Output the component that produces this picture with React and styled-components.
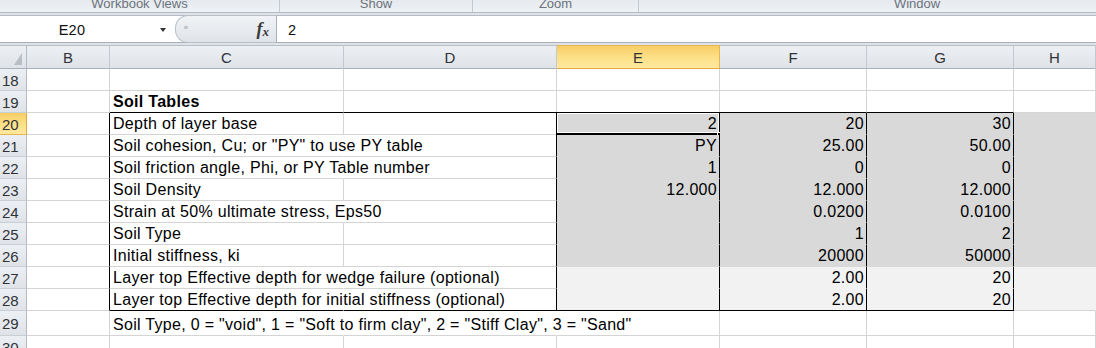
import React from 'react';
import styled, { createGlobalStyle } from 'styled-components';

const Global = createGlobalStyle`
  html, body { margin: 0; padding: 0; background: #fff; overflow: hidden; }
  body { font-family: "Liberation Sans", Arial, sans-serif; }
  * { box-sizing: border-box; }
`;

const Page = styled.div`
  width: 1096px;
  height: 348px;
  overflow: hidden;
  display: flex;
  flex-direction: column;
  background: #fff;
`;

const Ribbon = styled.div`
  flex: none;
  height: 13px;
  display: flex;
  overflow: hidden;
  background: linear-gradient(#e6eaef, #eef1f5);
  border-bottom: 1px solid #b3bac3;
`;

const RibbonGroup = styled.div`
  flex: none;
  width: ${p => p.$w}px;
  display: flex;
  justify-content: center;
  align-items: flex-start;
  border-right: 1px solid #c3c9d1;
  font-size: 13px;
  line-height: 13px;
  color: #6b727b;
  white-space: nowrap;
`;

const GroupLabel = styled.span`
  margin-top: -3px;
`;

const Strip = styled.div`
  flex: none;
  height: 2px;
  background: #dfe3e8;
`;

const FormulaBar = styled.div`
  flex: none;
  height: 28px;
  display: flex;
  align-items: stretch;
  background: #fff;
  border-top: 1px solid #b6bcc5;
  border-bottom: 1px solid #a9b0b9;
  font-size: 14.5px;
  color: #111;
`;

const NameBox = styled.div`
  flex: none;
  width: 144px;
  display: flex;
  align-items: center;
  justify-content: center;
  padding-top: 2px;
  letter-spacing: 0.3px;
`;

const DropBtn = styled.div`
  flex: none;
  width: 31px;
  display: flex;
  align-items: center;
  padding-left: 16px;
  padding-top: 1px;
`;

const Triangle = styled.span`
  width: 0;
  height: 0;
  border-left: 3.5px solid transparent;
  border-right: 3.5px solid transparent;
  border-top: 4px solid #333;
`;

const Pill = styled.div`
  flex: none;
  width: 102px;
  display: flex;
  align-items: center;
  justify-content: space-between;
  padding: 0 7px 0 8px;
  background: linear-gradient(#f1f3f6, #dfe3e8);
  border: 1px solid #b9c0c8;
  border-right-color: #a9b0b9;
  border-radius: 13px 0 0 13px;
  margin-top: -1px;
  margin-bottom: -1px;
`;

const Disabled = styled.span`
  width: 4px;
  height: 3px;
  border-radius: 1px;
  background: #c3c7cd;
  margin-top: -3px;
`;

const Fx = styled.span`
  font-family: "Liberation Serif", "Times New Roman", serif;
  font-style: italic;
  font-weight: 700;
  color: #3a3a3a;
  display: flex;
  align-items: baseline;
  padding-top: 1px;
`;

const FxF = styled.span`
  font-size: 18px;
`;

const FxX = styled.span`
  font-size: 13px;
  margin-left: 0px;
  position: relative;
  top: 1px;
`;

const FormulaValue = styled.div`
  flex: 1;
  display: flex;
  align-items: center;
  padding-left: 11px;
  padding-top: 2px;
`;

const Sheet = styled.div`
  flex: none;
  display: grid;
  grid-template-columns: 27px 83px 234px 213px 163px 147px 147px 1fr;
  grid-template-rows: 24px repeat(11, 22px) 25px 22px;
`;

const headerBg = 'linear-gradient(#eceff3, #dfe3e8)';
const selBg = 'linear-gradient(#f7cd66, #fde18a 55%, #ffe89f)';

const Corner = styled.div`
  background: ${headerBg};
  border-top: 1px solid #b7bec6;
  border-bottom: 1px solid #a9b0b9;
  border-right: 1px solid #b4bac2;
  display: flex;
  align-items: flex-end;
  justify-content: flex-end;
  padding: 0 4px 3px 0;
`;

const ColHeader = styled.div`
  background: ${p => (p.$sel ? selBg : headerBg)};
  border-top: 1px solid ${p => (p.$sel ? '#e3b653' : '#b7bec6')};
  border-bottom: 1px solid ${p => (p.$sel ? '#e0a93d' : '#a9b0b9')};
  border-right: 1px solid ${p => (p.$sel ? '#e3b653' : '#c4c9d0')};
  display: flex;
  align-items: center;
  justify-content: center;
  font-size: 15px;
  color: #2f3338;
  padding-top: 1px;
`;

const RowHeader = styled.div`
  background: ${p => (p.$sel ? selBg : headerBg)};
  border-right: 1px solid ${p => (p.$sel ? '#e0a93d' : '#b4bac2')};
  border-bottom: 1px solid ${p => (p.$sel ? '#e3b653' : '#c9ced5')};
  display: flex;
  align-items: center;
  padding: 1px 0 0 2px;
  font-size: 15px;
  color: #2f3338;
`;

const Cell = styled.div`
  position: relative;
  display: flex;
  align-items: flex-end;
  justify-content: ${p => (p.$right ? 'flex-end' : 'flex-start')};
  padding: 0 2px 1px 3px;
  background: ${p => p.$fill || 'transparent'};
  border-right: 1px solid ${p => p.$br};
  border-bottom: 1px solid ${p => p.$bb};
  font-size: 16px;
  line-height: 18px;
  letter-spacing: 0.3px;
  font-weight: ${p => (p.$bold ? 700 : 400)};
  white-space: nowrap;
  color: #000;
  min-width: 0;
`;

const Selection = styled.div`
  position: absolute;
  left: -1px;
  top: -1px;
  right: -1px;
  bottom: -2px;
  border: 1px solid #000;
  border-bottom-width: 3px;
  box-shadow: inset 0 0 0 1px #fff;
  pointer-events: none;
`;

const Handle = styled.div`
  position: absolute;
  right: -4px;
  bottom: -5px;
  width: 6px;
  height: 6px;
  background: #000;
  border: 1px solid #fff;
`;

const GRID = '#d4d4d4';
const BLACK = '#000';
const DARK = '#d9d9d9';
const LIGHT = '#f2f2f2';

const COLS = ['B', 'C', 'D', 'E', 'F', 'G', 'H'];

const ROWS = [
  { n: 18 },
  { n: 19, c: 'Soil Tables', bold: true },
  { n: 20, c: 'Depth of layer base', v: ['2', '20', '30'] },
  { n: 21, c: 'Soil cohesion, Cu; or "PY" to use PY table', v: ['PY', '25.00', '50.00'], over: 1 },
  { n: 22, c: 'Soil friction angle, Phi, or PY Table number', v: ['1', '0', '0'], over: 1 },
  { n: 23, c: 'Soil Density', v: ['12.000', '12.000', '12.000'] },
  { n: 24, c: 'Strain at 50% ultimate stress, Eps50', v: ['', '0.0200', '0.0100'], over: 1 },
  { n: 25, c: 'Soil Type', v: ['', '1', '2'] },
  { n: 26, c: 'Initial stiffness, ki', v: ['', '20000', '50000'] },
  { n: 27, c: 'Layer top Effective depth for wedge failure (optional)', v: ['', '2.00', '20'], over: 1 },
  { n: 28, c: 'Layer top Effective depth for initial stiffness (optional)', v: ['', '2.00', '20'], over: 1 },
  { n: 29, c: 'Soil Type, 0 = "void", 1 = "Soft to firm clay", 2 = "Stiff Clay", 3 = "Sand"', over: 2 },
  { n: 30 },
];

function fillOf(r, c) {
  if (c < 3) return null;
  if (r >= 20 && r <= 26) return DARK;
  if (r === 27 || r === 28) return LIGHT;
  return null;
}

function rightOf(row, c) {
  const r = row.n;
  const fill = fillOf(r, c);
  if (row.over && c >= 1 && c <= row.over) return 'transparent';
  if (r >= 20 && r <= 28) {
    if (c === 0 || (c >= 2 && c <= 5)) return BLACK;
    if (c === 6) return fill;
  }
  return GRID;
}

function bottomOf(row, c) {
  const r = row.n;
  const fill = fillOf(r, c);
  if ((r === 19 || r === 28) && c >= 1 && c <= 5) return BLACK;
  if (fill && r < 28) return fill;
  return GRID;
}

function cellContent(row, c) {
  if (c === 1 && row.c) return { text: row.c, right: false };
  if (c >= 3 && c <= 5 && row.v) return { text: row.v[c - 3], right: true };
  return { text: '', right: false };
}

export default function App() {
  return (
    <Page>
      <Global />
      <Ribbon>
        <RibbonGroup $w={280}><GroupLabel>Workbook Views</GroupLabel></RibbonGroup>
        <RibbonGroup $w={193}><GroupLabel>Show</GroupLabel></RibbonGroup>
        <RibbonGroup $w={166}><GroupLabel>Zoom</GroupLabel></RibbonGroup>
        <RibbonGroup $w={557}><GroupLabel>Window</GroupLabel></RibbonGroup>
      </Ribbon>
      <Strip />
      <FormulaBar>
        <NameBox>E20</NameBox>
        <DropBtn><Triangle /></DropBtn>
        <Pill>
          <Disabled />
          <Fx><FxF>f</FxF><FxX>x</FxX></Fx>
        </Pill>
        <FormulaValue>2</FormulaValue>
      </FormulaBar>
      <Strip />
      <Sheet>
        <Corner>
          <svg width="8" height="12" viewBox="0 0 8 12">
            <polygon points="8,0 8,12 0,12" fill="#b9bec5" />
          </svg>
        </Corner>
        {COLS.map(col => (
          <ColHeader key={col} $sel={col === 'E'}>{col}</ColHeader>
        ))}
        {ROWS.map(row => (
          <React.Fragment key={row.n}>
            <RowHeader $sel={row.n === 20}>{row.n}</RowHeader>
            {COLS.map((col, c) => {
              const { text, right } = cellContent(row, c);
              return (
                <Cell
                  key={col}
                  $fill={fillOf(row.n, c)}
                  $br={rightOf(row, c)}
                  $bb={bottomOf(row, c)}
                  $right={right}
                  $bold={row.bold && c === 1}
                >
                  {text}
                  {row.n === 20 && col === 'E' && (
                    <Selection>
                      <Handle />
                    </Selection>
                  )}
                </Cell>
              );
            })}
          </React.Fragment>
        ))}
      </Sheet>
    </Page>
  );
}
